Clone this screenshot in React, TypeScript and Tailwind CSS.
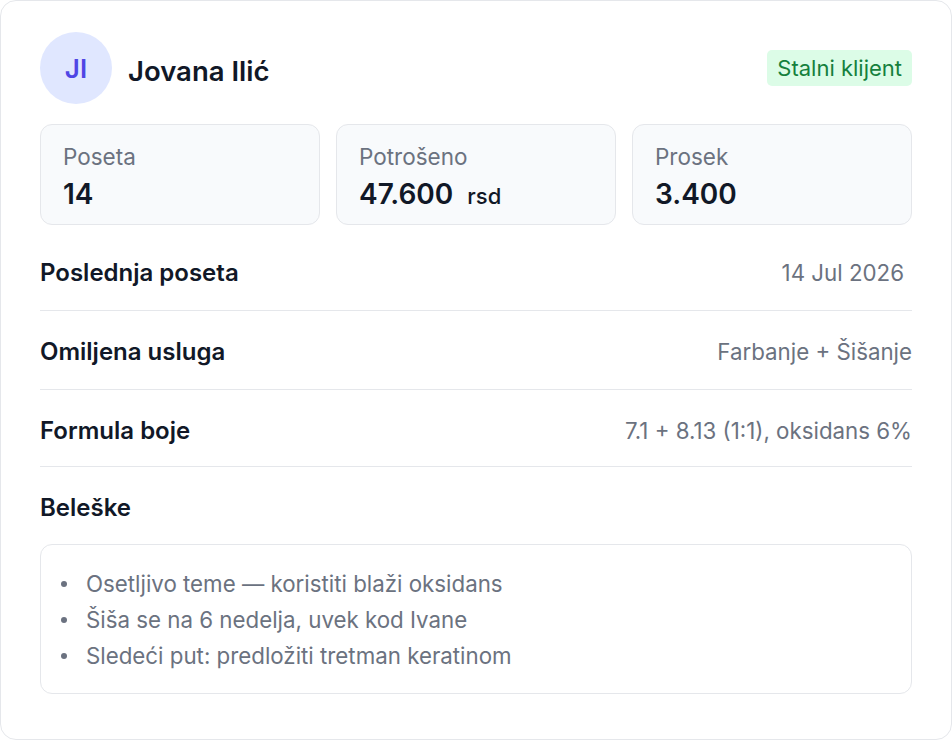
import React from "react";

const stats = [
  { label: "Poseta", value: "14", unit: "" },
  { label: "Potrošeno", value: "47.600", unit: "rsd" },
  { label: "Prosek", value: "3.400", unit: "" },
];

const rows = [
  { label: "Poslednja poseta", value: "14 Jul 2026", pad: true },
  { label: "Omiljena usluga", value: "Farbanje + Šišanje", pad: false },
  { label: "Formula boje", value: "7.1 + 8.13 (1:1), oksidans 6%", pad: false },
];

const notes = [
  "Osetljivo teme — koristiti blaži oksidans",
  "Šiša se na 6 nedelja, uvek kod Ivane",
  "Sledeći put: predložiti tretman keratinom",
];

export default function App() {
  return (
    <div className="w-[952px] h-[740px] bg-white font-['Inter',sans-serif]">
      <div className="w-full h-full border border-[#e5e7eb] rounded-[16px] px-[39px] pt-[31px]">
        {/* header */}
        <div className="flex items-center justify-between">
          <div className="flex items-center gap-4">
            <div className="w-[72px] h-[72px] rounded-full bg-[#e0e7ff] flex items-center justify-center text-[#4f46e5] text-[26px] font-semibold">
              JI
            </div>
            <span className="text-[27.5px] font-semibold text-[#111827] mt-[8px]">Jovana Ilić</span>
          </div>
          <span className="bg-[#dcfce7] text-[#15803d] text-[22px] leading-[36px] px-[10px] rounded-[5px]">
            Stalni klijent
          </span>
        </div>

        {/* stats */}
        <div className="grid grid-cols-3 gap-4 mt-5">
          {stats.map((s) => (
            <div
              key={s.label}
              className="h-[101px] rounded-[12px] border border-[#e5e7eb] bg-[#f8fafc] px-[22px] pt-[17px] flex flex-col"
            >
              <span className="text-[22.5px] leading-[30px] text-[#6b7280]">{s.label}</span>
              <span className="mt-[4px] text-[28px] leading-[36px] font-semibold text-[#111827] flex items-baseline">
                {s.value}
                {s.unit && <span className="text-[22px] font-medium ml-[14px]">{s.unit}</span>}
              </span>
            </div>
          ))}
        </div>

        {/* rows */}
        <div className="mt-[7px]">
          {rows.map((r, i) => (
            <div
              key={r.label}
              className={`flex items-center justify-between border-b border-[#e5e7eb] pt-[26px] leading-[30px] ${i === 2 ? "pb-[20px]" : "pb-[22px]"}`}
            >
              <span className="text-[24px] font-semibold text-[#111827]">{r.label}</span>
              <span className={`text-[22.3px] text-[#6b7280] ${r.pad ? "pr-2" : ""}`}>{r.value}</span>
            </div>
          ))}
        </div>

        {/* notes */}
        <div className="pt-[26px]">
          <div className="text-[24px] leading-[30px] font-semibold text-[#111827]">Beleške</div>
          <ul className="mt-[21px] rounded-[12px] border border-[#e5e7eb] px-5 pt-[21px] pb-[19px]">
            {notes.map((n) => (
              <li key={n} className="flex items-center text-[22.3px] leading-[36px] text-[#6b7280]">
                <span className="w-[6px] h-[6px] rounded-full bg-[#6b7280] mr-[19px]"></span>
                {n}
              </li>
            ))}
          </ul>
        </div>
      </div>
    </div>
  );
}
